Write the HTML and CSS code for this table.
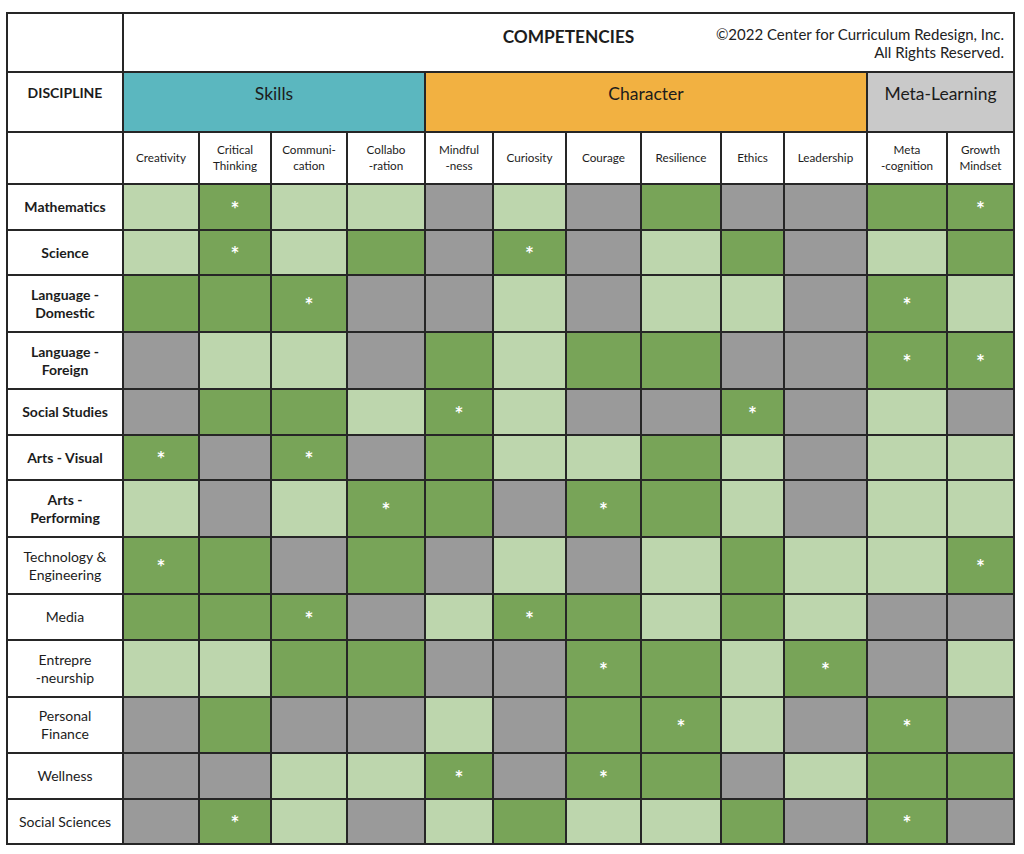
FILE: index.html
```html
<!DOCTYPE html>
<html lang="en">
<head>
<meta charset="utf-8">
<title>Competencies by Discipline</title>
<link rel="stylesheet" href="styles.css">
</head>
<body>
<div class="chart">
  <div class="cell blank"></div>
  <div class="cell top-head">
    <div class="title">COMPETENCIES</div>
    <div class="copy">©2022 Center for Curriculum Redesign, Inc.<br>All Rights Reserved.</div>
  </div>

  <div class="cell disc-head">DISCIPLINE</div>
  <div class="cell cat skills">Skills</div>
  <div class="cell cat character">Character</div>
  <div class="cell cat meta">Meta-Learning</div>

  <div class="cell blank"></div>
  <div class="cell sub">Creativity</div>
  <div class="cell sub">Critical<br>Thinking</div>
  <div class="cell sub">Communi-<br>cation</div>
  <div class="cell sub">Collabo<br>-ration</div>
  <div class="cell sub">Mindful<br>-ness</div>
  <div class="cell sub">Curiosity</div>
  <div class="cell sub">Courage</div>
  <div class="cell sub">Resilience</div>
  <div class="cell sub">Ethics</div>
  <div class="cell sub">Leadership</div>
  <div class="cell sub">Meta<br>-cognition</div>
  <div class="cell sub">Growth<br>Mindset</div>

  <div class="cell label bold">Mathematics</div>
  <div class="cell l"></div><div class="cell d s">*</div><div class="cell l"></div><div class="cell l"></div><div class="cell g"></div><div class="cell l"></div><div class="cell g"></div><div class="cell d"></div><div class="cell g"></div><div class="cell g"></div><div class="cell d"></div><div class="cell d s">*</div>

  <div class="cell label bold">Science</div>
  <div class="cell l"></div><div class="cell d s">*</div><div class="cell l"></div><div class="cell d"></div><div class="cell g"></div><div class="cell d s">*</div><div class="cell g"></div><div class="cell l"></div><div class="cell d"></div><div class="cell g"></div><div class="cell l"></div><div class="cell d"></div>

  <div class="cell label bold">Language -<br>Domestic</div>
  <div class="cell d"></div><div class="cell d"></div><div class="cell d s">*</div><div class="cell g"></div><div class="cell g"></div><div class="cell l"></div><div class="cell g"></div><div class="cell l"></div><div class="cell l"></div><div class="cell g"></div><div class="cell d s">*</div><div class="cell l"></div>

  <div class="cell label bold">Language -<br>Foreign</div>
  <div class="cell g"></div><div class="cell l"></div><div class="cell l"></div><div class="cell g"></div><div class="cell d"></div><div class="cell l"></div><div class="cell d"></div><div class="cell d"></div><div class="cell g"></div><div class="cell g"></div><div class="cell d s">*</div><div class="cell d s">*</div>

  <div class="cell label bold">Social Studies</div>
  <div class="cell g"></div><div class="cell d"></div><div class="cell d"></div><div class="cell l"></div><div class="cell d s">*</div><div class="cell l"></div><div class="cell g"></div><div class="cell g"></div><div class="cell d s">*</div><div class="cell g"></div><div class="cell l"></div><div class="cell g"></div>

  <div class="cell label bold">Arts - Visual</div>
  <div class="cell d s">*</div><div class="cell g"></div><div class="cell d s">*</div><div class="cell g"></div><div class="cell d"></div><div class="cell l"></div><div class="cell l"></div><div class="cell d"></div><div class="cell l"></div><div class="cell g"></div><div class="cell l"></div><div class="cell l"></div>

  <div class="cell label bold">Arts -<br>Performing</div>
  <div class="cell l"></div><div class="cell g"></div><div class="cell l"></div><div class="cell d s">*</div><div class="cell d"></div><div class="cell g"></div><div class="cell d s">*</div><div class="cell d"></div><div class="cell l"></div><div class="cell g"></div><div class="cell l"></div><div class="cell l"></div>

  <div class="cell label">Technology &amp;<br>Engineering</div>
  <div class="cell d s">*</div><div class="cell d"></div><div class="cell g"></div><div class="cell d"></div><div class="cell g"></div><div class="cell l"></div><div class="cell g"></div><div class="cell l"></div><div class="cell d"></div><div class="cell l"></div><div class="cell l"></div><div class="cell d s">*</div>

  <div class="cell label">Media</div>
  <div class="cell d"></div><div class="cell d"></div><div class="cell d s">*</div><div class="cell g"></div><div class="cell l"></div><div class="cell d s">*</div><div class="cell d"></div><div class="cell l"></div><div class="cell d"></div><div class="cell l"></div><div class="cell g"></div><div class="cell g"></div>

  <div class="cell label">Entrepre<br>-neurship</div>
  <div class="cell l"></div><div class="cell l"></div><div class="cell d"></div><div class="cell d"></div><div class="cell g"></div><div class="cell g"></div><div class="cell d s">*</div><div class="cell d"></div><div class="cell l"></div><div class="cell d s">*</div><div class="cell g"></div><div class="cell l"></div>

  <div class="cell label">Personal<br>Finance</div>
  <div class="cell g"></div><div class="cell d"></div><div class="cell g"></div><div class="cell g"></div><div class="cell l"></div><div class="cell g"></div><div class="cell d"></div><div class="cell d s">*</div><div class="cell l"></div><div class="cell g"></div><div class="cell d s">*</div><div class="cell g"></div>

  <div class="cell label">Wellness</div>
  <div class="cell g"></div><div class="cell g"></div><div class="cell l"></div><div class="cell l"></div><div class="cell d s">*</div><div class="cell g"></div><div class="cell d s">*</div><div class="cell d"></div><div class="cell g"></div><div class="cell l"></div><div class="cell d"></div><div class="cell d"></div>

  <div class="cell label">Social Sciences</div>
  <div class="cell g"></div><div class="cell d s">*</div><div class="cell l"></div><div class="cell g"></div><div class="cell l"></div><div class="cell d"></div><div class="cell l"></div><div class="cell l"></div><div class="cell d"></div><div class="cell g"></div><div class="cell d s">*</div><div class="cell g"></div>
</div>
</body>
</html>
```

FILE: styles.css
```css
html, body {
  margin: 0;
  padding: 0;
  background: #ffffff;
}

body {
  font-family: Lato, "Open Sans", "Liberation Sans", sans-serif;
  color: #1c1c1c;
}

.chart {
  display: grid;
  grid-template-columns: 114px 74px 70px 74px 76px 66px 71px 73px 78px 61px 81px 78px 65px;
  grid-template-rows: 57px 58px 50px 44px 43px 55px 55px 44px 43px 55px 55px 44px 55px 54px 44px 43px;
  gap: 2px;
  padding: 2px;
  background: #262626;
  width: max-content;
  margin: 12px 0 0 6px;
}

.cell {
  background: #ffffff;
  display: flex;
  align-items: center;
  justify-content: center;
  text-align: center;
}

.top-head {
  grid-column: 2 / span 12;
  display: grid;
  grid-template-columns: 1fr auto 1fr;
  align-items: start;
}

.title {
  grid-column: 2;
  font-weight: 700;
  font-size: 17.3px;
  line-height: 20px;
  padding-top: 13px;
}

.copy {
  grid-column: 3;
  justify-self: end;
  text-align: right;
  font-size: 15px;
  line-height: 18px;
  padding: 11px 9px 0 0;
  color: #222222;
}

.disc-head {
  font-weight: 700;
  font-size: 14px;
  padding-bottom: 20px;
}

.cat {
  font-size: 17.5px;
  padding-bottom: 17px;
}

.skills {
  grid-column: span 4;
  background: #5bb7bf;
}

.character {
  grid-column: span 6;
  background: #f2b141;
}

.meta {
  grid-column: span 2;
  background: #c9c9c9;
}

.sub {
  font-size: 11.7px;
  line-height: 16px;
  padding-bottom: 2px;
}

.label {
  font-size: 14px;
  line-height: 18px;
}

.bold {
  font-weight: 700;
}

.l {
  background: #bdd6ad;
}

.d {
  background: #78a458;
}

.g {
  background: #9a9a9a;
}

.s {
  color: #ffffff;
  font-weight: 700;
  font-size: 21px;
  line-height: 21px;
  padding-top: 2px;
}
```
